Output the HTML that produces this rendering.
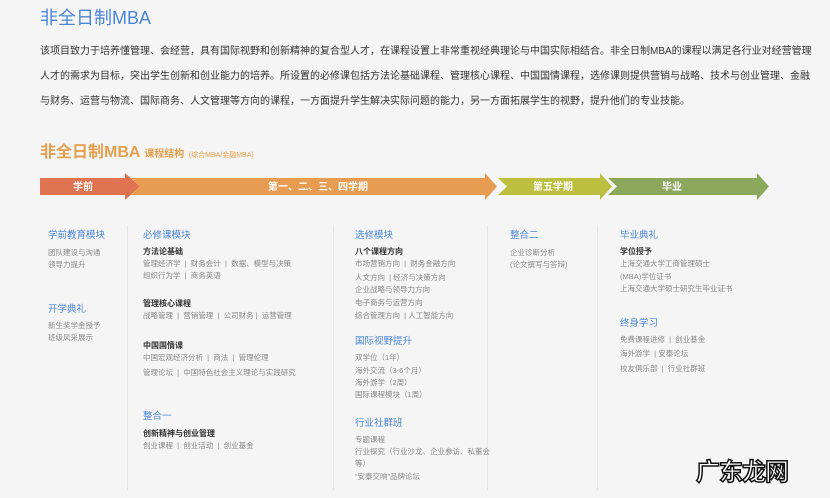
<!DOCTYPE html>
<html><head><meta charset="utf-8"><style>
body{margin:0;width:830px;height:498px;background:#f5f5f5;position:relative;overflow:hidden;font-family:"Liberation Sans","Noto Sans CJK SC",sans-serif;}
.a{position:absolute;white-space:nowrap;}
.h{color:#4a86d8;font-size:9.5px;margin-top:1px;}
.b{color:#333;font-size:8px;font-weight:bold;}
.g{color:#888;font-size:7.5px;}
.p{color:#333;font-size:10px;}
.d{position:absolute;top:225px;height:265px;width:1px;background:#e2e7ee;}
</style></head><body>
<div class="a" style="left:40px;top:4px;font-size:18px;color:#4a86d8;">非全日制MBA</div>
<div class="a p" style="left:40px;top:42px;">该项目致力于培养懂管理、会经营，具有国际视野和创新精神的复合型人才，在课程设置上非常重视经典理论与中国实际相结合。非全日制MBA的课程以满足各行业对经营管理</div>
<div class="a p" style="left:40px;top:67px;">人才的需求为目标，突出学生创新和创业能力的培养。所设置的必修课包括方法论基础课程、管理核心课程、中国国情课程，选修课则提供营销与战略、技术与创业管理、金融</div>
<div class="a p" style="left:40px;top:92px;">与财务、运营与物流、国际商务、人文管理等方向的课程，一方面提升学生解决实际问题的能力，另一方面拓展学生的视野，提升他们的专业技能。</div>
<div class="a" style="left:40px;top:138px;font-size:16px;color:#e3a04e;font-weight:bold;">非全日制MBA <span style="font-size:10px;">课程结构</span> <span style="font-size:7px;font-weight:normal;">(综合MBA/金融MBA)</span></div>
<svg class="a" style="left:0;top:0" width="830" height="498">
<polygon points="40,178 125,178 125,173 140,186.5 125,200 125,195 40,195" fill="#e07452"/>
<polygon points="131,178 485,178 485,173 497,186.5 485,200 485,195 131,195 140,186.5" fill="#e89c52"/>
<polygon points="498,178 600,178 600,173 612,186.5 600,200 600,195 498,195 507,186.5" fill="#bcbf40"/>
<polygon points="608,178 757,178 757,173 769,186.5 757,200 757,195 608,195 617,186.5" fill="#8ca85c"/>
<g fill="#fff" font-size="10" font-weight="bold" font-family="Liberation Sans,Noto Sans CJK SC,sans-serif" text-anchor="middle">
<text x="83" y="190">学前</text><text x="318" y="190">第一、二、三、四学期</text><text x="553" y="190">第五学期</text><text x="672" y="190">毕业</text></g>
</svg>
<div class="d" style="left:127px"></div><div class="d" style="left:333px"></div><div class="d" style="left:487px"></div><div class="d" style="left:597px"></div>

<div class="a h" style="left:48px;top:226px">学前教育模块</div>
<div class="a g" style="left:48px;top:247px">团队建设与沟通</div>
<div class="a g" style="left:48px;top:259px">领导力提升</div>
<div class="a h" style="left:48px;top:300px">开学典礼</div>
<div class="a g" style="left:48px;top:320px">新生奖学金授予</div>
<div class="a g" style="left:48px;top:332px">班级风采展示</div>

<div class="a h" style="left:143px;top:226px">必修课模块</div>
<div class="a b" style="left:143px;top:246px">方法论基础</div>
<div class="a g" style="left:143px;top:258px">管理经济学 &nbsp;| &nbsp;财务会计 &nbsp;| &nbsp;数据、模型与决策</div>
<div class="a g" style="left:143px;top:270px">组织行为学 &nbsp;| &nbsp;商务英语</div>
<div class="a b" style="left:143px;top:298px">管理核心课程</div>
<div class="a g" style="left:143px;top:310px">战略管理 &nbsp;| &nbsp;营销管理 &nbsp;| &nbsp;公司财务 | &nbsp;运营管理</div>
<div class="a b" style="left:143px;top:340px">中国国情课</div>
<div class="a g" style="left:143px;top:352px">中国宏观经济分析 &nbsp;| &nbsp;商法 &nbsp;| &nbsp;管理伦理</div>
<div class="a g" style="left:143px;top:367px">管理论坛 &nbsp;| &nbsp;中国特色社会主义理论与实践研究</div>
<div class="a h" style="left:143px;top:407px">整合一</div>
<div class="a b" style="left:143px;top:428px">创新精神与创业管理</div>
<div class="a g" style="left:143px;top:440px">创业课程 &nbsp;| &nbsp;创业活动 &nbsp;| &nbsp;创业基金</div>

<div class="a h" style="left:355px;top:226px">选修模块</div>
<div class="a b" style="left:355px;top:246px">八个课程方向</div>
<div class="a g" style="left:355px;top:258px">市场营销方向 &nbsp;| &nbsp;财务金融方向</div>
<div class="a g" style="left:355px;top:272px">人文方向 &nbsp;| 经济与决策方向</div>
<div class="a g" style="left:355px;top:284px">企业战略与领导力方向</div>
<div class="a g" style="left:355px;top:297px">电子商务与运营方向</div>
<div class="a g" style="left:355px;top:310px">综合管理方向 &nbsp;| 人工智能方向</div>
<div class="a h" style="left:355px;top:332px">国际视野提升</div>
<div class="a g" style="left:355px;top:352px">双学位（1年）</div>
<div class="a g" style="left:355px;top:365px">海外交流（3-6个月）</div>
<div class="a g" style="left:355px;top:377px">海外游学（2周）</div>
<div class="a g" style="left:355px;top:389px">国际课程模块（1周）</div>
<div class="a h" style="left:355px;top:414px">行业社群班</div>
<div class="a g" style="left:355px;top:434px">专题课程</div>
<div class="a g" style="left:355px;top:446px">行业探究（行业沙龙、企业参访、私董会</div>
<div class="a g" style="left:355px;top:458px">等）</div>
<div class="a g" style="left:355px;top:471px">“安泰交响”品牌论坛</div>

<div class="a h" style="left:510px;top:226px">整合二</div>
<div class="a g" style="left:510px;top:247px">企业诊断分析</div>
<div class="a g" style="left:510px;top:259px">(论文撰写与答辩)</div>

<div class="a h" style="left:620px;top:226px">毕业典礼</div>
<div class="a b" style="left:620px;top:246px">学位授予</div>
<div class="a g" style="left:620px;top:258px">上海交通大学工商管理硕士</div>
<div class="a g" style="left:620px;top:271px">(MBA)学位证书</div>
<div class="a g" style="left:620px;top:283px">上海交通大学硕士研究生毕业证书</div>
<div class="a h" style="left:620px;top:314px">终身学习</div>
<div class="a g" style="left:620px;top:334px">免费课程进修 &nbsp;| &nbsp;创业基金</div>
<div class="a g" style="left:620px;top:348px">海外游学 &nbsp;| 安泰论坛</div>
<div class="a g" style="left:620px;top:363px">校友俱乐部 &nbsp;| &nbsp;行业社群班</div>

<div class="a" style="left:696px;top:452px;font-size:24px;font-weight:bold;color:#fff;-webkit-text-stroke:1.5px #111;letter-spacing:-1px;">广东龙网</div>
</body></html>
